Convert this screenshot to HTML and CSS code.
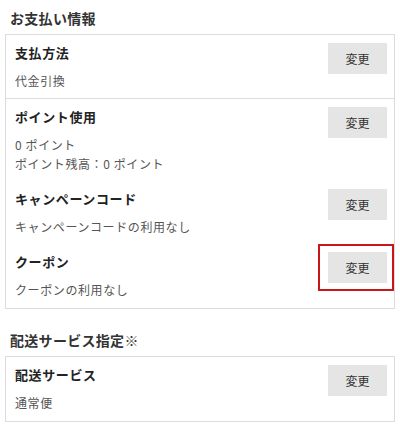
FILE: index.html
```html
<!DOCTYPE html>
<html lang="ja">
<head>
<meta charset="utf-8">
<link rel="stylesheet" href="styles.css">
</head>
<body>
<section class="section">
  <h2 class="section-title">お支払い情報</h2>
  <div class="box">
    <div class="block">
      <div class="row">
        <div class="info">
          <div class="label">支払方法</div>
          <div class="value">代金引換</div>
        </div>
        <button class="btn">変更</button>
      </div>
    </div>
    <div class="block">
      <div class="row">
        <div class="info">
          <div class="label">ポイント使用</div>
          <div class="value">0 ポイント<br>ポイント残高：0 ポイント</div>
        </div>
        <button class="btn">変更</button>
      </div>
      <div class="row">
        <div class="info">
          <div class="label">キャンペーンコード</div>
          <div class="value">キャンペーンコードの利用なし</div>
        </div>
        <button class="btn">変更</button>
      </div>
      <div class="row row-end">
        <div class="info">
          <div class="label">クーポン</div>
          <div class="value">クーポンの利用なし</div>
        </div>
        <div class="highlight"><button class="btn">変更</button></div>
      </div>
    </div>
  </div>
</section>
<section class="section second">
  <h2 class="section-title">配送サービス指定※</h2>
  <div class="box">
    <div class="block">
      <div class="row row-end">
        <div class="info">
          <div class="label">配送サービス</div>
          <div class="value">通常便</div>
        </div>
        <button class="btn">変更</button>
      </div>
    </div>
  </div>
</section>
</body>
</html>
```
FILE: styles.css
```css
html, body {
  margin: 0;
  padding: 0;
  background: #fff;
}
body {
  font-family: "Noto Sans CJK JP", "Noto Sans", sans-serif;
  color: #333;
  padding: 8px 5px 0 5px;
}
.section-title {
  margin: 0 0 6px 5px;
  font-size: 14px;
  line-height: 20px;
  font-weight: 700;
  color: #333;
  letter-spacing: 0.3px;
}
.second {
  margin-top: 21px;
}
.box {
  border: 1px solid #dcdcdc;
  width: 388px;
}
.block + .block {
  border-top: 1px solid #dcdcdc;
}
.row {
  display: flex;
  justify-content: space-between;
  align-items: flex-start;
  padding: 8px 7px 8px 9px;
}
.row-end {
  padding-bottom: 9px;
}
.label {
  font-size: 13px;
  line-height: 20px;
  font-weight: 700;
  color: #222;
  letter-spacing: 0.6px;
}
.value {
  margin-top: 8px;
  font-size: 12px;
  line-height: 19px;
  color: #555;
  letter-spacing: 0.6px;
}
.btn {
  width: 59px;
  height: 31px;
  border: none;
  background: #e5e5e5;
  font-family: "Noto Sans CJK JP", sans-serif;
  font-size: 12px;
  color: #333;
  padding: 0;
  cursor: pointer;
}
.highlight {
  position: relative;
  display: flex;
}
.highlight::after {
  content: "";
  position: absolute;
  top: -8px;
  bottom: -8px;
  left: -10px;
  right: -7px;
  border: 2px solid #c8161d;
}
```
